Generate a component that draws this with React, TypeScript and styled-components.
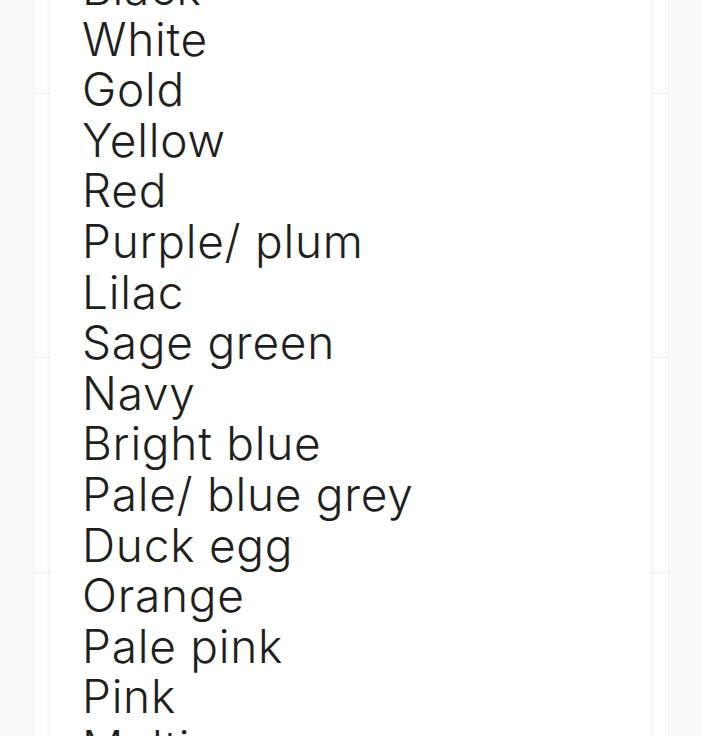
import styled, { createGlobalStyle } from "styled-components";

const colours = [
  "Black",
  "White",
  "Gold",
  "Yellow",
  "Red",
  "Purple/ plum",
  "Lilac",
  "Sage green",
  "Navy",
  "Bright blue",
  "Pale/ blue grey",
  "Duck egg",
  "Orange",
  "Pale pink",
  "Pink",
  "Multi",
];

const rows = [93, 263, 214, 400];

function App() {
  return (
    <>
      <GlobalStyle />
      <Page>
        <Card>
          {rows.map((h, i) => (
            <Row key={i} $height={h} />
          ))}
        </Card>
        <Dropdown>
          {colours.map((c) => (
            <Option key={c}>{c}</Option>
          ))}
        </Dropdown>
      </Page>
    </>
  );
}

export default App;

const GlobalStyle = createGlobalStyle`
  html, body {
    margin: 0;
    padding: 0;
    background: #fcfbf9;
    overflow: hidden;
  }
`;

const Page = styled.div`
  position: relative;
  width: 702px;
  height: 736px;
  overflow: hidden;
  padding: 0 33px;
  box-sizing: border-box;
`;

const Card = styled.div`
  display: flex;
  flex-direction: column;
  height: 100%;
  background: #fefefe;
  border-left: 1px solid #f1f0ee;
  border-right: 1px solid #f1f0ee;
`;

const Row = styled.div<{ $height: number }>`
  flex: 0 0 ${(p) => p.$height}px;
  border-bottom: 1px solid #efefef;
`;

const Dropdown = styled.ul`
  position: absolute;
  top: -37px;
  left: 50px;
  width: 601px;
  margin: 0;
  padding: 0 0 0 32px;
  box-sizing: border-box;
  list-style: none;
  background: #ffffff;
  box-shadow: 0 0 3px 1px rgba(0, 0, 0, 0.07);
`;

const Option = styled.li`
  font-family: "Inter", "Noto Sans", sans-serif;
  font-size: 46px;
  font-weight: 300;
  line-height: 50.6px;
  color: #1f1f1f;
  letter-spacing: 0.75px;
`;
